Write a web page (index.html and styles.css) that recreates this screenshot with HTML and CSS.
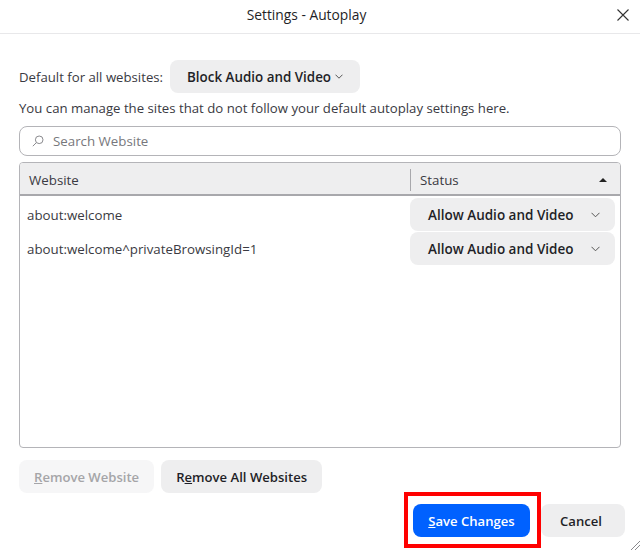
FILE: index.html
```html
<!DOCTYPE html>
<html lang="en">
<head>
<meta charset="utf-8">
<title>Settings - Autoplay</title>
<link rel="stylesheet" href="styles.css">
</head>
<body>
<div class="dialog">
  <header class="titlebar">
    <h1 class="title">Settings - Autoplay</h1>
    <button class="close" aria-label="Close">
      <svg width="12" height="12" viewBox="0 0 12 12"><path d="M.5.5l11 11M11.500.5l-11 11" class="stroke-dark"/></svg>
    </button>
  </header>
  <main class="content">
    <div class="default-row">
      <span>Default for all websites:</span>
      <button class="btn select-main">Block Audio and Video
        <svg class="chev" width="8" height="5" viewBox="0 0 8 5"><path d="M.5.7L4 4.200 7.500.7" class="stroke-mid"/></svg>
      </button>
    </div>
    <p class="hint">You can manage the sites that do not follow your default autoplay settings here.</p>
    <div class="search">
      <svg width="12" height="12" viewBox="0 0 12 12"><circle cx="7.200" cy="4.800" r="3.800" class="stroke-grey"/><path d="M4.400 7.600L.8 11.200" class="stroke-grey"/></svg>
      <span>Search Website</span>
    </div>
    <div class="table">
      <div class="thead">
        <div class="th th-site">Website</div>
        <div class="th th-status"><span>Status</span><span class="sort"></span></div>
      </div>
      <div class="row">
        <span class="site">about:welcome</span>
        <button class="btn status">Allow Audio and Video
          <svg width="9" height="6" viewBox="0 0 9 6"><path d="M.5.8L4.500 4.800 8.500.8" class="stroke-mid"/></svg>
        </button>
      </div>
      <div class="row">
        <span class="site">about:welcome^privateBrowsingId=1</span>
        <button class="btn status">Allow Audio and Video
          <svg width="9" height="6" viewBox="0 0 9 6"><path d="M.5.8L4.500 4.800 8.500.8" class="stroke-mid"/></svg>
        </button>
      </div>
    </div>
    <div class="remove-row">
      <button class="btn disabled"><u>R</u>emove Website</button>
      <button class="btn">R<u>e</u>move All Websites</button>
    </div>
    <div class="footer">
      <div class="save-wrap">
        <button class="btn primary"><u>S</u>ave Changes</button>
        <div class="highlight"></div>
      </div>
      <button class="btn cancel">Cancel</button>
    </div>
  </main>
  <svg class="grip" width="10" height="10" viewBox="0 0 10 10"><path d="M10 1L1 10M10 5L5 10" class="stroke-grey"/></svg>
</div>
</body>
</html>
```
FILE: styles.css
```css
* { box-sizing: border-box; }
html, body { margin: 0; height: 100%; }
body {
  background: #fff;
  color: #1f1f27;
  font-family: "Open Sans", "Noto Sans", sans-serif;
  font-size: 13.300px;
  overflow: hidden;
}
svg { fill: none; flex: none; }
.stroke-dark { stroke: #333; stroke-width: 1.1; }
.stroke-mid { stroke: #555; stroke-width: 1; }
.stroke-grey { stroke: #8a8a8e; stroke-width: 1; }
.dialog { position: relative; width: 640px; height: 550px; }
.titlebar {
  position: relative;
  height: 34px;
  border-bottom: 1px solid #e8e8ea;
  display: flex;
  align-items: center;
  justify-content: center;
  padding: 0 27px 4px 0;
}
.title { margin: 0; font-size: 13.800px; font-weight: 500; }
.close {
  position: absolute;
  right: 10px;
  top: 8px;
  width: 14px;
  height: 14px;
  padding: 0;
  border: 0;
  background: none;
  display: flex;
  align-items: center;
  justify-content: center;
}
.content { padding: 26px 15px 0 19px; }
.btn {
  font: inherit;
  font-weight: 550;
  color: #1f1f27;
  background: #eeeeef;
  border: 0;
  border-radius: 8px;
  height: 33px;
  padding: 0 15px;
}
.default-row { display: flex; align-items: center; gap: 7px; color: #3a3a42; font-size: 13.200px; }
.select-main {
  width: 190px;
  height: 33px;
  display: flex;
  align-items: center;
  justify-content: center;
  gap: 4px;
  font-size: 13.400px;
  white-space: nowrap;
}
.hint { margin: 5px 0 0; height: 28px; line-height: 20px; color: #3a3a42; font-size: 13.200px; }
.search {
  width: 602px;
  height: 30px;
  border: 1px solid #b4b4b8;
  border-radius: 8px;
  display: flex;
  align-items: center;
  gap: 15px;
  padding-left: 12px;
  color: #77777c;
  padding-bottom: 1px;
}
.search span { margin-left: -6px; font-size: 13.300px; }
.table {
  margin-top: 6px;
  width: 602px;
  height: 286px;
  border: 1px solid #b4b4b8;
  border-radius: 4px;
  overflow: hidden;
}
.thead {
  display: flex;
  height: 33px;
  background: #eeeeef;
  border-bottom: 2px solid #a8a8ac;
  align-items: center;
  color: #3a3a42;
  padding-top: 3px;
}
.th-site { width: 390px; padding-left: 9px; }
.th-status {
  flex: 1;
  display: flex;
  align-items: center;
  justify-content: space-between;
  height: 22px;
  border-left: 1px solid #a8a8ac;
  padding: 0 13px 0 9px;
}
.sort {
  width: 0;
  height: 0;
  border-left: 4px solid transparent;
  border-right: 4px solid transparent;
  border-bottom: 4px solid #222;
}
.row {
  display: flex;
  align-items: center;
  justify-content: space-between;
  height: 34px;
  padding: 0 5px 0 7px;
  color: #3a3a42;
}
.row:nth-child(2) { margin-top: 1px; }
.site { padding-top: 1px; }
.status {
  width: 205px;
  height: 33px;
  display: flex;
  align-items: center;
  justify-content: space-between;
  padding: 1px 15px 0 18px;
  font-size: 13.500px;
}
.remove-row { display: flex; gap: 7px; margin-top: 12px; }
.remove-row .btn { font-size: 13.100px; }
.disabled { background: #f6f6f7; color: #a5a5a8; }
.footer {
  display: flex;
  justify-content: flex-end;
  gap: 11px;
  margin-top: 11px;
}
.save-wrap { position: relative; }
.primary { background: #0061ff; color: #fff; width: 117px; padding: 0; display: block; font-size: 13.100px; }
.cancel { width: 84px; padding: 0 4px 0 0; font-size: 13.100px; }
.highlight {
  position: absolute;
  left: -9px;
  top: -12px;
  width: 137px;
  height: 56px;
  border: 4px solid #ff0000;
}
.grip { position: absolute; right: 0; bottom: 0; }
```
